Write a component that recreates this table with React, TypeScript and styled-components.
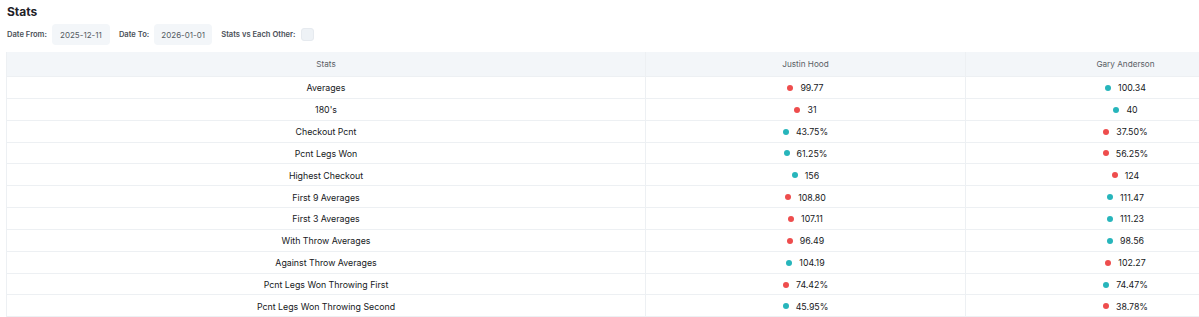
import styled, { createGlobalStyle } from "styled-components";

const GlobalStyle = createGlobalStyle`
  body {
    margin: 0;
    background: #ffffff;
    font-family: Inter, "Noto Sans", sans-serif;
    color: #222;
    overflow: hidden;
  }
`;

const Page = styled.div`
  padding: 4px 6px 0;
  width: 1280px;
`;

const Title = styled.h2`
  margin: 0 0 0 1px;
  font-size: 12px;
  font-weight: 700;
  line-height: 16px;
  color: #1f2328;
`;

const Filters = styled.div`
  display: flex;
  align-items: center;
  height: 21px;
  margin-top: 4px;
  margin-left: 1px;
`;

const Label = styled.span`
  font-size: 7.6px;
  font-weight: 600;
  color: #4a4f57;
  margin-right: 5px;
`;

const DateBox = styled.div`
  width: 58px;
  height: 21px;
  box-sizing: border-box;
  border-radius: 4px;
  background: #f3f6f9;
  font-size: 8px;
  color: #555b63;
  display: flex;
  align-items: center;
  justify-content: center;
  margin-right: 9px;
`;

const Check = styled.div`
  width: 13px;
  height: 13px;
  border-radius: 3px;
  background: #eef2f6;
  border: 1px solid #e6eaef;
  box-sizing: border-box;
`;

const Table = styled.div`
  margin-top: 7px;
  display: grid;
  grid-template-columns: 640px 320px 320px;
`;

const Cell = styled.div<{ $head?: boolean }>`
  height: ${(p) => (p.$head ? "25px" : "21.85px")};
  box-sizing: border-box;
  display: flex;
  align-items: center;
  justify-content: center;
  gap: 7px;
  padding-top: ${(p) => (p.$head ? "0" : "1px")};
  font-size: ${(p) => (p.$head ? "8.2px" : "8.8px")};
  color: ${(p) => (p.$head ? "#5a5f66" : "#16181b")};
  background: ${(p) => (p.$head ? "#f3f6f9" : "#fff")};
  border-bottom: 1px solid #edf0f3;
  border-right: 1px solid #edf0f3;
  &:nth-child(3n + 1) {
    border-left: 1px solid #edf0f3;
  }
`;

const Dot = styled.span<{ $good: boolean }>`
  width: 6px;
  height: 6px;
  border-radius: 50%;
  background: ${(p) => (p.$good ? "#27b5bb" : "#ee4d4d")};
  flex-shrink: 0;
`;

type Row = { name: string; a: string; b: string; aGood: boolean };

const rows: Row[] = [
  { name: "Averages", a: "99.77", b: "100.34", aGood: false },
  { name: "180's", a: "31", b: "40", aGood: false },
  { name: "Checkout Pcnt", a: "43.75%", b: "37.50%", aGood: true },
  { name: "Pcnt Legs Won", a: "61.25%", b: "56.25%", aGood: true },
  { name: "Highest Checkout", a: "156", b: "124", aGood: true },
  { name: "First 9 Averages", a: "108.80", b: "111.47", aGood: false },
  { name: "First 3 Averages", a: "107.11", b: "111.23", aGood: false },
  { name: "With Throw Averages", a: "96.49", b: "98.56", aGood: false },
  { name: "Against Throw Averages", a: "104.19", b: "102.27", aGood: true },
  { name: "Pcnt Legs Won Throwing First", a: "74.42%", b: "74.47%", aGood: false },
  { name: "Pcnt Legs Won Throwing Second", a: "45.95%", b: "38.78%", aGood: true },
];

export default function App() {
  return (
    <Page>
      <GlobalStyle />
      <Title>Stats</Title>
      <Filters>
        <Label>Date From:</Label>
        <DateBox>2025-12-11</DateBox>
        <Label>Date To:</Label>
        <DateBox>2026-01-01</DateBox>
        <Label>Stats vs Each Other:</Label>
        <Check />
      </Filters>
      <Table>
        <Cell $head>Stats</Cell>
        <Cell $head>Justin Hood</Cell>
        <Cell $head>Gary Anderson</Cell>
        {rows.map((r) => [
          <Cell key={r.name + "n"}>{r.name}</Cell>,
          <Cell key={r.name + "a"}>
            <Dot $good={r.aGood} />
            {r.a}
          </Cell>,
          <Cell key={r.name + "b"}>
            <Dot $good={!r.aGood} />
            {r.b}
          </Cell>,
        ])}
      </Table>
    </Page>
  );
}
